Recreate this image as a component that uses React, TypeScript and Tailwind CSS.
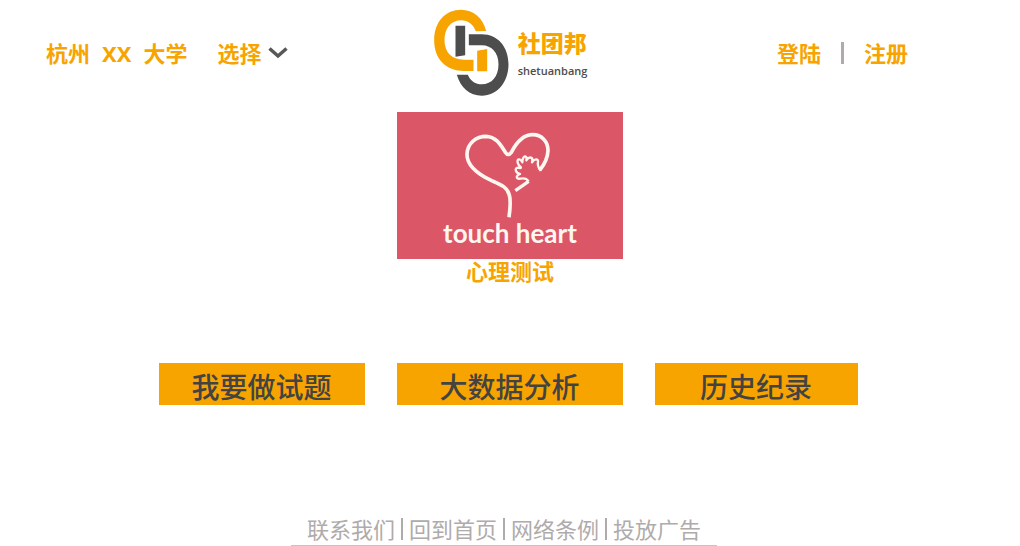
import React from "react";

const tests = [
  { label: "我要做试题", width: "w-[206px]" },
  { label: "大数据分析", width: "w-[226px]" },
  { label: "历史纪录", width: "w-[203px]" },
];

const footerLinks = ["联系我们", "回到首页", "网络条例", "投放广告"];

function Logo() {
  return (
    <a href="#" className="flex items-center gap-2" aria-label="社团邦">
      <svg viewBox="38 25 230 270" className="h-[90px] w-[77px]" aria-hidden="true">
        <path
          fill="#f7a400"
          d="M197 94C188 55 158 30 122 30C76 30 41 65 41 122C41 180 78 214 130 214H159V180H130C94 180 72 158 72 122C72 85 92 62 122 62C143 62 158 74 166 95Z"
        />
        <path fill="#f7a400" d="M170 153L200 148V215H170Z" />
        <path fill="#4d4d4d" d="M105 78H134V167L105 171Z" />
        <path
          fill="#4d4d4d"
          d="M145 104H184C232 104 264 142 264 194C264 248 230 288 184 288C147 288 120 263 109 225H142C150 244 165 254 184 254C214 254 234 231 234 194C234 160 214 137 184 137H145Z"
        />
      </svg>
      <span className="flex flex-col pt-1">
        <span className="text-[23px] leading-8 font-black text-[#f7a400]">社团邦</span>
        <span className="font-['Open_Sans',sans-serif] text-[11px] leading-6 font-semibold text-[#4d4d4d]">
          shetuanbang
        </span>
      </span>
    </a>
  );
}

function HeartDrawing() {
  return (
    <svg
      viewBox="220 80 270 264"
      className="h-[88px] w-[90px]"
      fill="none"
      stroke="#fff6f0"
      strokeLinejoin="round"
      aria-hidden="true"
    >
      <path
        strokeWidth="11"
        d="M358 339C362 310 363 286 359 272C353 248 334 241 306 229C270 212 231 188 232 149C234 115 261 96 289 96C321 97 334 124 347 144Q355 157 365 144C379 117 397 91 429 91C456 91 475 111 475 139C474 162 464 181 450 198"
      />
      <path
        strokeWidth="7"
        d="M453 199C446 190 443 181 445 172C446 164 436 161 427 174C432 159 420 154 410 168C414 151 399 152 398 174C391 158 376 165 388 183C398 191 394 193 385 190C373 191 378 207 391 209C377 215 379 225 393 223C403 221 412 224 417 231"
      />
      <path strokeWidth="10" d="M417 231L377 259" />
    </svg>
  );
}

export default function App() {
  return (
    <div className="bg-white font-['Noto_Sans','Noto_Sans_CJK_SC',sans-serif] text-[22px] text-[#f7a400]">
      <header className="grid grid-cols-[1fr_auto_1fr] items-center pt-2 pr-28 pb-3.5 pl-[46px] font-bold">
        <div className="flex items-center gap-3">
          <span>杭州</span>
          <span>XX</span>
          <span>大学</span>
          <button type="button" className="ml-[18px] flex items-center gap-1.5">
            选择
            <svg viewBox="0 0 20 12" className="h-3 w-5" fill="none" aria-hidden="true">
              <path d="M1.500 1.500L10 9L18.500 1.500" stroke="#595757" strokeWidth="3.500" />
            </svg>
          </button>
        </div>
        <div className="ml-[66px]">
          <Logo />
        </div>
        <nav className="flex items-center justify-end gap-5">
          <a href="#">登陆</a>
          <span className="h-[22px] w-[3px] bg-[#afabab]" />
          <a href="#">注册</a>
        </nav>
      </header>

      <main className="flex flex-col items-center">
        <figure className="flex flex-col items-center">
          <div className="flex h-[147px] w-[226px] flex-col items-center bg-[#db5666] pt-[19px] text-[#fff6f0]">
            <div className="pr-1">
              <HeartDrawing />
            </div>
            <span className="font-['Lato',sans-serif] text-[26px] leading-7 font-bold">
              touch heart
            </span>
          </div>
          <figcaption className="leading-6 font-bold">心理测试</figcaption>
        </figure>

        <div className="mt-20 flex flex-wrap justify-center gap-8 pr-1">
          {tests.map((test) => (
            <button
              key={test.label}
              type="button"
              className={`${test.width} h-[42px] bg-[#f7a400] pt-1.5 text-[28px] leading-9 font-medium text-[#434343]`}
            >
              {test.label}
            </button>
          ))}
        </div>
      </main>

      <footer className="mt-[108px] flex justify-center pr-3">
        <nav className="flex items-center gap-1.5 border-b border-[#c4c2c2] px-4 leading-8 text-[#afabab]">
          {footerLinks.map((label, index) => (
            <React.Fragment key={label}>
              {index > 0 && <span className="h-[22px] w-0.5 bg-[#afabab]" />}
              <a href="#">{label}</a>
            </React.Fragment>
          ))}
        </nav>
      </footer>
    </div>
  );
}
